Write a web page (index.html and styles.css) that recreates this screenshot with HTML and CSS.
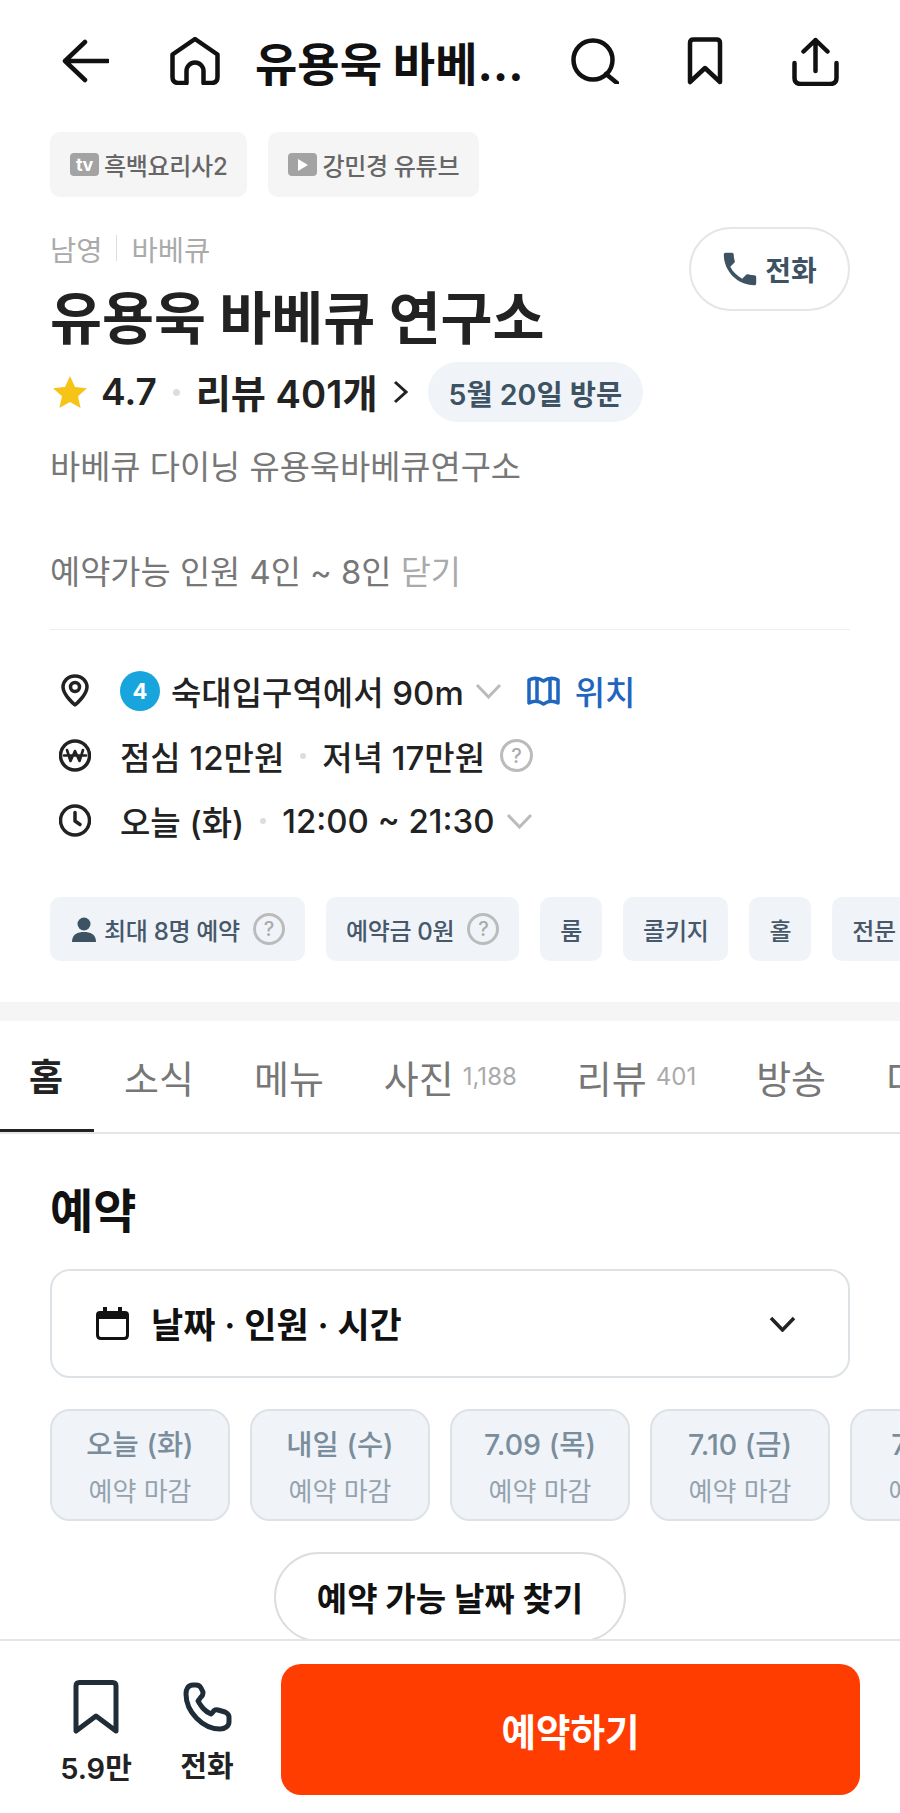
FILE: index.html
```html
<!DOCTYPE html>
<html lang="ko">
<head>
    <meta charset="UTF-8">
    <meta name="viewport" content="width=device-width, initial-scale=1.0">
    <title>유용욱 바베큐 연구소</title>
    <link rel="stylesheet" href="styles.css">
</head>
<body>
    <div class="page">
        <div class="content">
            <header class="topbar">
                <svg class="icon-back" width="47" height="44" viewBox="0 0 47 44"><path d="M23 3 L3 22 L23 41 M3 22 H46"/></svg>
                <svg class="icon-home" width="50" height="48" viewBox="0 0 50 48"><path d="M25 2 L47.5 17.5 V40 Q47.5 46 41.5 46 H33.5 V34 a8.5 8.5 0 0 0 -17 0 V46 H8.5 Q2.5 46 2.5 40 V17.5 Z"/></svg>
                <div class="topbar-title">유용욱 바베큐 연구소</div>
                <svg class="icon-search" width="48" height="46" viewBox="0 0 48 46"><circle cx="22" cy="22" r="19.5"/><path d="M35 36 L46 45"/></svg>
                <svg class="icon-mark" width="36" height="48" viewBox="0 0 36 48"><path d="M3 6 Q3 2.5 6.5 2.5 H29.5 Q33 2.5 33 6 V45 L18 31 L3 45 Z"/></svg>
                <svg class="icon-share" width="47" height="49" viewBox="0 0 47 49"><path d="M23.5 3 V34 M11.5 14.5 L23.5 3 L35.5 14.5 M2.5 26 V41 Q2.5 47 9 47 H38 Q44.5 47 44.5 41 V26"/></svg>
            </header>

            <div class="source-chips">
                <div class="source-chip"><span class="source-icon">tv</span>흑백요리사2</div>
                <div class="source-chip">
                    <span class="source-icon"><svg width="12" height="14" viewBox="0 0 12 14"><path d="M1 1 L11 7 L1 13 Z" fill="#fff"/></svg></span>강민경 유튜브
                </div>
            </div>

            <section class="info">
                <div class="head">
                    <div class="head-text">
                        <div class="category">남영<span class="category-bar"></span>바베큐</div>
                        <h1 class="name">유용욱 바베큐 연구소</h1>
                    </div>
                    <div class="call-btn">
                        <svg width="36" height="36" viewBox="2 2 20 20"><path fill="#3d5363" d="M6.62 10.79c1.44 2.83 3.76 5.14 6.59 6.59l2.2-2.2c.27-.27.67-.36 1.02-.24 1.12.37 2.33.57 3.57.57.55 0 1 .45 1 1V20c0 .55-.45 1-1 1-9.39 0-17-7.61-17-17 0-.55.45-1 1-1h3.5c.55 0 1 .45 1 1 0 1.25.2 2.45.57 3.57.11.35.03.74-.25 1.02l-2.2 2.2z"/></svg>
                        전화
                    </div>
                </div>

                <div class="rating">
                    <svg width="34" height="32" viewBox="0 0 34 32"><path fill="#f6c417" d="M17 0 L22 11 L34 12.3 L25 20.3 L27.6 32 L17 26 L6.4 32 L9 20.3 L0 12.3 L12 11 Z"/></svg>
                    <span class="score">4.7</span>
                    <span class="dot"></span>
                    <span class="reviews">리뷰 401개</span>
                    <svg class="rating-arrow" width="15" height="24" viewBox="0 0 15 24"><path d="M2 2 L13 12 L2 22"/></svg>
                    <span class="visit">5월 20일 방문</span>
                </div>

                <p class="desc">바베큐 다이닝 유용욱바베큐연구소</p>
                <p class="desc desc-second">예약가능 인원 4인 ~ 8인 <span class="close">닫기</span></p>

                <div class="divider"></div>

                <div class="meta-row">
                    <svg class="meta-icon" width="32" height="33" viewBox="0 0 32 33"><path d="M16 2 C8.5 2 4 7.5 4 13 C4 21 16 31 16 31 C16 31 28 21 28 13 C28 7.5 23.5 2 16 2 Z"/><circle cx="16" cy="13" r="4.5"/></svg>
                    <span class="line-badge">4</span>
                    <span class="station">숙대입구역에서 90m</span>
                    <svg class="chev" width="27" height="16" viewBox="0 0 27 16"><path d="M2 2 L13.5 14 L25 2"/></svg>
                    <svg class="map-icon" width="33" height="30" viewBox="0 0 33 30"><path d="M2 4 Q9 0 16.5 5 Q24 0 31 4 V27 Q24 23 16.5 28 Q9 23 2 27 Z M10 3 V24 M23 3 V24"/></svg>
                    <span class="map-link">위치</span>
                </div>
                <div class="meta-row">
                    <svg class="meta-icon" width="32" height="33" viewBox="0 0 32 33"><circle cx="16" cy="16.5" r="14.5"/><path class="won" d="M8 11 L11.5 22 L16 12 L20.5 22 L24 11 M5 16.5 H27"/></svg>
                    <span class="meta-text">점심 12만원</span>
                    <span class="dot dot-meta"></span>
                    <span class="meta-text">저녁 17만원</span>
                    <span class="help help-meta">?</span>
                </div>
                <div class="meta-row">
                    <svg class="meta-icon" width="32" height="33" viewBox="0 0 32 33"><circle cx="16" cy="16.5" r="14.5"/><path d="M16 8.5 V17 L21 20.5"/></svg>
                    <span class="meta-text">오늘 (화)</span>
                    <span class="dot dot-meta"></span>
                    <span class="meta-text">12:00 ~ 21:30</span>
                    <svg class="chev" width="27" height="16" viewBox="0 0 27 16"><path d="M2 2 L13.5 14 L25 2"/></svg>
                </div>

                <div class="tags">
                    <div class="tag">
                        <svg class="tag-person" width="24" height="25" viewBox="0 0 24 25"><circle cx="12" cy="7" r="6.5" fill="#3d5363"/><path fill="#3d5363" d="M0 25 C0 17 6 15 12 15 C18 15 24 17 24 25 Z"/></svg>
                        최대 8명 예약<span class="help help-tag">?</span>
                    </div>
                    <div class="tag">예약금 0원<span class="help help-tag">?</span></div>
                    <div class="tag">룸</div>
                    <div class="tag">콜키지</div>
                    <div class="tag">홀</div>
                    <div class="tag">전문 소믈리에</div>
                </div>
            </section>

            <div class="band"></div>

            <nav class="tabs">
                <div class="tab tab-active">홈</div>
                <div class="tab">소식</div>
                <div class="tab">메뉴</div>
                <div class="tab">사진<span class="tab-count">1,188</span></div>
                <div class="tab">리뷰<span class="tab-count">401</span></div>
                <div class="tab">방송</div>
                <div class="tab">더보기</div>
            </nav>

            <section class="booking">
                <h2 class="booking-title">예약</h2>
                <div class="picker">
                    <svg width="33" height="33" viewBox="0 0 33 33"><path fill="#111" d="M7 0 H11 V4 H22 V0 H26 V4 H29 Q33 4 33 8 V28 Q33 33 28 33 H5 Q0 33 0 28 V8 Q0 4 4 4 H7 Z M3 12 V28 Q3 30 5 30 H28 Q30 30 30 28 V12 Z"/></svg>
                    <span class="picker-text">날짜 · 인원 · 시간</span>
                    <svg class="picker-chev" width="27" height="16" viewBox="0 0 27 16"><path d="M2 2 L13.5 14 L25 2"/></svg>
                </div>
                <div class="dates">
                    <div class="date-card"><div class="date-day">오늘 (화)</div><div class="date-state">예약 마감</div></div>
                    <div class="date-card"><div class="date-day">내일 (수)</div><div class="date-state">예약 마감</div></div>
                    <div class="date-card"><div class="date-day">7.09 (목)</div><div class="date-state">예약 마감</div></div>
                    <div class="date-card"><div class="date-day">7.10 (금)</div><div class="date-state">예약 마감</div></div>
                    <div class="date-card"><div class="date-day">7.11 (토)</div><div class="date-state">예약 마감</div></div>
                </div>
                <div class="find-wrap"><div class="find-btn">예약 가능 날짜 찾기</div></div>
            </section>
        </div>

        <footer class="bottom">
            <div class="bottom-item bottom-mark">
                <svg width="46" height="54" viewBox="0 0 46 54"><path d="M3 6 Q3 2.5 6.5 2.5 H39.5 Q43 2.5 43 6 V51 L23 36 L3 51 Z"/></svg>
                <span>5.9만</span>
            </div>
            <div class="bottom-item bottom-call">
                <svg width="49" height="50" viewBox="0 0 49 50"><path d="M10 3 C5 3 3 7 3 12 C3 30 20 47 37 47 C42 47 46 44 46 40 V35 C46 32 44 31 42 30 L35 28 C33 27.5 31 28 30 30 L28 32 C21 29 18 24 15 19 L18 15 C20 13.5 20 12 20 10 L18 6 C17 4 15 3 13 3 Z"/></svg>
                <span>전화</span>
            </div>
            <div class="reserve-btn">예약하기</div>
        </footer>
    </div>
</body>
</html>
```

FILE: styles.css
```css
* {
    box-sizing: border-box;
}

body {
    margin: 0;
    font-family: Inter, "Noto Sans CJK KR", sans-serif;
    background-color: #fff;
    color: #222;
}

svg {
    display: block;
    flex-shrink: 0;
    fill: none;
}

.page {
    width: 900px;
    height: 1813px;
    display: flex;
    flex-direction: column;
    overflow: hidden;
}

.content {
    height: 1639px;
    overflow: hidden;
}

/* top bar */
.topbar {
    height: 122px;
    padding-left: 62px;
    display: flex;
    align-items: center;
}

.topbar svg path,
.topbar svg circle {
    stroke: #111;
    stroke-width: 4.5;
    stroke-linecap: round;
    stroke-linejoin: round;
}

.icon-home {
    margin-left: 61px;
}

.topbar-title {
    width: 276px;
    margin-left: 35px;
    font-size: 46px;
    font-weight: 700;
    color: #111;
    white-space: nowrap;
    overflow: hidden;
    text-overflow: ellipsis;
}

.icon-search {
    margin-left: 40px;
}

.icon-mark {
    margin-left: 68px;
}

.icon-share {
    margin-left: 69px;
}

.source-chips {
    margin-top: 10px;
    padding-left: 50px;
    display: flex;
    gap: 21px;
}

.source-chip {
    height: 65px;
    padding: 0 20px;
    display: flex;
    align-items: center;
    gap: 5px;
    background-color: #f5f5f5;
    border-radius: 10px;
    font-size: 24px;
    font-weight: 500;
    letter-spacing: -0.3px;
    color: #666;
}

.source-icon {
    width: 29px;
    height: 23px;
    display: flex;
    align-items: center;
    justify-content: center;
    background-color: #a3a3a3;
    border-radius: 4px;
    color: #fff;
    font-size: 18px;
    font-weight: 700;
}

/* info */
.info {
    padding: 0 50px;
}

.head {
    margin-top: 30px;
    display: flex;
    justify-content: space-between;
    align-items: flex-start;
}

.category {
    height: 42px;
    display: flex;
    align-items: center;
    font-size: 28.5px;
    color: #aaa;
}

.category-bar {
    width: 1px;
    height: 26px;
    margin: 0 14px;
    background-color: #ddd;
}

.name {
    height: 93px;
    margin: 0;
    font-size: 56.5px;
    line-height: 99px;
    font-weight: 700;
    color: #222;
    white-space: nowrap;
}

.call-btn {
    width: 161px;
    height: 84px;
    display: flex;
    align-items: center;
    justify-content: center;
    gap: 7px;
    border: 2px solid #e5e5e5;
    border-radius: 42px;
    font-size: 28px;
    font-weight: 600;
    color: #3d5363;
}

.rating {
    height: 60px;
    display: flex;
    align-items: center;
    padding-left: 3px;
}

.score {
    margin-left: 14px;
    margin-bottom: 2px;
    font-size: 37px;
    font-weight: 600;
}

.dot {
    width: 7px;
    height: 7px;
    margin: 0 16px;
    border-radius: 50%;
    background-color: #ddd;
}

.reviews {
    margin-bottom: 2px;
    font-size: 38.2px;
    font-weight: 600;
}

.rating-arrow {
    margin-left: 15px;
}

.rating-arrow path {
    stroke: #222;
    stroke-width: 3;
}

.visit {
    height: 60px;
    margin-left: 20px;
    padding: 0 21px;
    display: flex;
    align-items: center;
    background-color: #f0f4f8;
    border-radius: 30px;
    font-size: 28.5px;
    font-weight: 600;
    color: #3d5363;
}

.desc {
    height: 40px;
    margin: 25px 0 0;
    font-size: 32.8px;
    line-height: 40px;
    color: #777;
}

.desc-second {
    margin-top: 65px;
}

.close {
    color: #aaa;
}

.divider {
    height: 1px;
    margin-top: 37px;
    background-color: #eee;
}

.meta-row {
    height: 65px;
    display: flex;
    align-items: center;
    font-size: 33px;
    font-weight: 500;
    color: #222;
}

.divider + .meta-row {
    margin-top: 28px;
}

.meta-icon {
    margin-left: 9px;
    margin-right: 29px;
}

.meta-icon path,
.meta-icon circle {
    stroke: #222;
    stroke-width: 3.5;
    stroke-linecap: round;
    stroke-linejoin: round;
}

.meta-icon .won {
    stroke-width: 2.6;
}

.line-badge {
    width: 40px;
    height: 40px;
    display: flex;
    align-items: center;
    justify-content: center;
    background-color: #18a5de;
    border-radius: 50%;
    color: #fff;
    font-size: 22px;
    font-weight: 700;
}

.station {
    margin-left: 11px;
}

.chev path {
    stroke: #bbb;
    stroke-width: 3;
}

.meta-row .chev {
    margin-left: 11px;
}

.map-icon {
    margin-left: 25px;
}

.map-icon path {
    stroke: #1f66bf;
    stroke-width: 3.5;
    stroke-linejoin: round;
}

.map-link {
    margin-left: 15px;
    color: #1f66bf;
}

.dot-meta {
    width: 6px;
    height: 6px;
    margin: 0 16px;
}

.help {
    display: flex;
    align-items: center;
    justify-content: center;
    flex-shrink: 0;
    border: 3px solid #bbb;
    border-radius: 50%;
    color: #aaa;
    font-weight: 500;
}

.help-meta {
    width: 33px;
    height: 33px;
    margin-left: 15px;
    font-size: 20px;
}

.help-tag {
    width: 32px;
    height: 32px;
    margin-left: 7px;
    font-size: 20px;
}

.tags {
    margin-top: 44px;
    margin-right: -60px;
    display: flex;
    gap: 21px;
}

.tag {
    height: 64px;
    padding: 0 20px;
    display: flex;
    align-items: center;
    gap: 6px;
    flex-shrink: 0;
    background-color: #f0f4f8;
    border-radius: 10px;
    font-size: 24px;
    font-weight: 500;
    letter-spacing: -0.3px;
    color: #46586a;
    white-space: nowrap;
}

.tag-person {
    margin: 0 2px;
}

.band {
    height: 19px;
    margin-top: 41px;
    background-color: #f5f5f5;
}

/* tabs */
.tabs {
    height: 113px;
    display: flex;
    border-bottom: 2px solid #e5e5e5;
    white-space: nowrap;
    overflow: hidden;
}

.tab {
    height: 111px;
    padding: 0 30px;
    display: flex;
    align-items: center;
    flex-shrink: 0;
    font-size: 38px;
    color: #777;
}

.tab-active {
    width: 94px;
    padding: 0 29px;
    font-size: 37px;
    font-weight: 700;
    color: #222;
    border-bottom: 3px solid #222;
}

.tab-count {
    margin-left: 9px;
    font-size: 24px;
    color: #aaa;
}

/* booking */
.booking {
    padding: 47px 50px 0;
}

.booking-title {
    height: 60px;
    margin: 0;
    font-size: 47px;
    line-height: 60px;
    font-weight: 700;
    color: #111;
}

.picker {
    height: 109px;
    margin-top: 28px;
    padding: 0 52px 0 44px;
    display: flex;
    align-items: center;
    border: 2px solid #dde2e6;
    border-radius: 20px;
}

.picker-text {
    margin-left: 22px;
    margin-bottom: 3px;
    font-size: 35px;
    font-weight: 600;
    color: #111;
}

.picker-chev {
    margin-left: auto;
}

.picker-chev path {
    stroke: #222;
    stroke-width: 3.5;
}

.dates {
    margin-top: 31px;
    margin-right: -60px;
    display: flex;
    gap: 20px;
}

.date-card {
    width: 180px;
    height: 112px;
    flex-shrink: 0;
    display: flex;
    flex-direction: column;
    align-items: center;
    justify-content: center;
    gap: 8px;
    background-color: #f0f4f8;
    border: 2px solid #dde2e6;
    border-radius: 20px;
}

.date-day {
    font-size: 28.5px;
    font-weight: 500;
    color: #7a8d9c;
}

.date-state {
    font-size: 26px;
    color: #94a3af;
}

.find-wrap {
    margin-top: 31px;
    display: flex;
    justify-content: center;
}

.find-btn {
    width: 352px;
    height: 90px;
    display: flex;
    align-items: center;
    justify-content: center;
    border: 2px solid #ddd;
    border-radius: 45px;
    font-size: 33px;
    font-weight: 700;
    color: #111;
}

/* bottom bar */
.bottom {
    height: 174px;
    padding-top: 23px;
    display: flex;
    align-items: flex-start;
    border-top: 2px solid #e5e5e5;
    background-color: #fff;
}

.bottom-item {
    display: flex;
    flex-direction: column;
    align-items: center;
    font-size: 29px;
    font-weight: 600;
    color: #222;
    white-space: nowrap;
}

.bottom-item span {
    margin-top: 11px;
}

.bottom-item svg path {
    stroke: #1f2d38;
    stroke-width: 5;
    stroke-linejoin: round;
}

.bottom-mark {
    width: 72px;
    margin-left: 60px;
    padding-top: 16px;
}

.bottom-call {
    width: 52px;
    margin-left: 49px;
    padding-top: 18px;
}

.reserve-btn {
    width: 579px;
    height: 131px;
    margin-left: 48px;
    display: flex;
    align-items: center;
    justify-content: center;
    background-color: #ff3d00;
    border-radius: 20px;
    font-size: 37.5px;
    font-weight: 700;
    color: #fff;
}
```
